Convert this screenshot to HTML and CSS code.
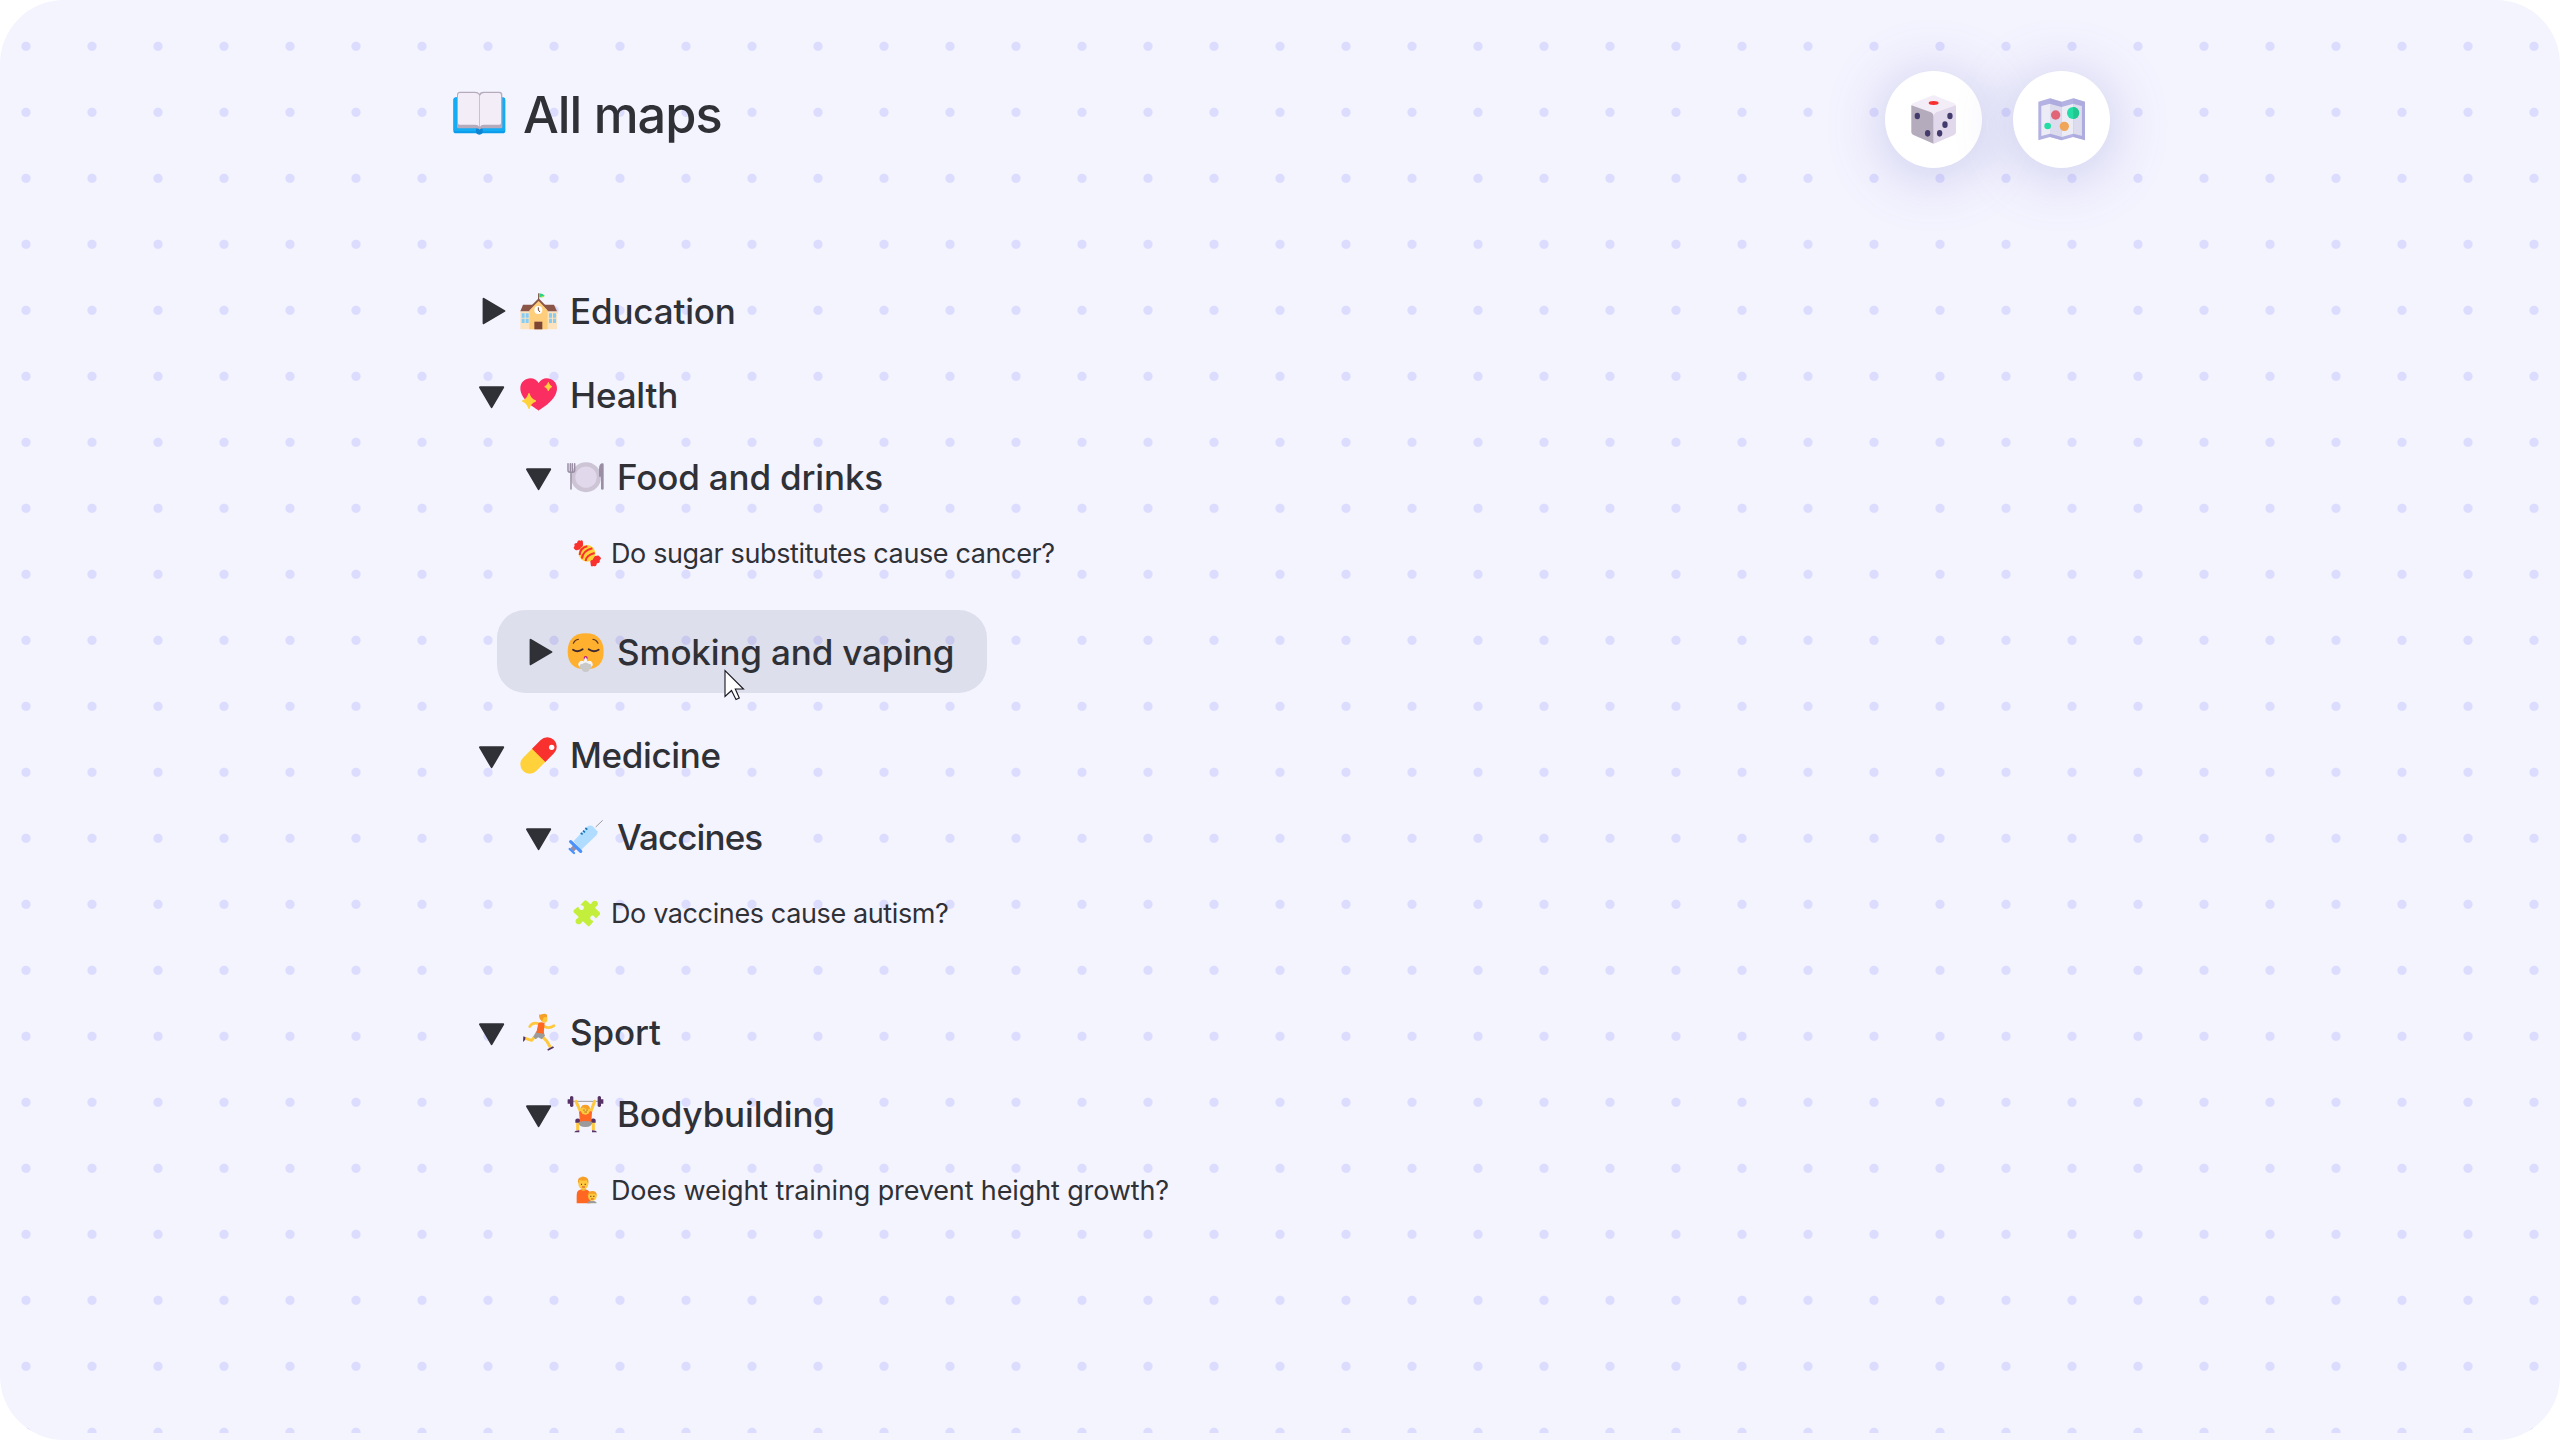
FILE: index.html
```html
<!DOCTYPE html>
<html lang="en">
<head>
<meta charset="utf-8">
<title>All maps</title>
<link rel="stylesheet" href="styles.css">
</head>
<body>
<svg class="sprite" aria-hidden="true">
  <symbol id="closed" viewBox="0 0 28 28"><path d="M5.6 1.8L26.4 14L5.6 26.2Z" fill="#2f3136" stroke="#2f3136" stroke-width="2" stroke-linejoin="round"/></symbol>
  <symbol id="open" viewBox="0 0 28 28"><path d="M2 6.3H25.2L13.6 26.1Z" fill="#2f3136" stroke="#2f3136" stroke-width="2" stroke-linejoin="round"/></symbol>
</svg>
<div class="frame">
  <main class="page">
    <header class="top">
      <h1 class="title">
        <svg class="book" viewBox="0 0 159 131">
          <rect x="1" y="19" width="156" height="108" rx="8" fill="#0a9ce8"/>
          <rect x="2" y="20" width="154" height="101" rx="6" fill="#14acf5"/>
          <path d="M69 112h20v14q-10 10-20 0z" fill="#0a86d4"/>
          <path d="M12 12q0-10 9-10h46q9 0 12 6q3-6 12-6h48q9 0 9 9v98q0 3-4 3H91q-9 0-11 4q-3-4-11-4H16q-4 0-4-4z" fill="#b6abbc"/>
          <path d="M15 12q0-6 6-6h45q10 0 13 8v93q-3-6-12-6H20q-5 0-5-4z" fill="#f3edf8"/>
          <path d="M81 14q3-8 12-8h45q6 0 6 6v85q0 4-5 4H92q-9 0-11 6z" fill="#f3edf8"/>
        </svg>
        <span>All maps</span>
      </h1>
      <nav class="actions">
        <a class="round">
          <svg class="dice" viewBox="0 0 136 146">
            <path d="M68 1Q72 1 80 5L130 25Q135 28 135 34V112Q135 117 129 120L75 143Q68 147 61 143L6 119Q1 116 1 111V32Q1 28 6 25L58 4Q64 1 68 1Z" fill="#f3edf8"/>
            <path d="M1 31L60 52Q68 56 68 66V146Q64 145 61 143L6 119Q1 116 1 111Z" fill="#b4acbc"/>
            <path d="M135 31L76 52Q68 56 68 66V146Q72 145 75 143L129 120Q135 117 135 112Z" fill="#e1d8ec"/>
            <ellipse cx="68" cy="24" rx="15" ry="6" fill="#f8312f"/>
            <g fill="#433b6b"><ellipse cx="19" cy="63" rx="8" ry="10"/><ellipse cx="50" cy="115" rx="8" ry="10"/><ellipse cx="117" cy="63" rx="8" ry="10"/><ellipse cx="102" cy="89" rx="8" ry="10"/><ellipse cx="86" cy="115" rx="8" ry="10"/></g>
          </svg>
        </a>
        <a class="round">
          <svg class="map" viewBox="0 0 142 128">
            <path d="M1 11L36 1L71 11L106 1L141 11V127L106 117L71 127L36 117L1 127Z" fill="#b4b2e2"/>
            <path d="M10 24L36 17V107L10 114Z" fill="#ececf7"/><path d="M36 17L71 27V117L36 107Z" fill="#dcdcee"/>
            <path d="M71 27L106 17V107L71 117Z" fill="#ececf7"/><path d="M106 17L132 24V114L106 107Z" fill="#dcdcee"/>
            <path d="M36 1L71 11V27L36 17ZM106 1L141 11V127L132 124V24L106 17ZM36 107L71 117V127L36 117ZM106 107L132 114V124L106 117Z" fill="#a9a7da" opacity=".55"/>
            <circle cx="53" cy="51" r="14" fill="#e26577"/><circle cx="105" cy="45" r="18" fill="#24dda4"/><path d="M106 27A18 18 0 0 1 106 63Z" fill="#22c790"/>
            <circle cx="29" cy="84" r="10" fill="#24dda4"/><circle cx="79" cy="85" r="14" fill="#f0a659"/>
          </svg>
        </a>
      </nav>
    </header>

    <ul class="tree">
      <li class="folder folded">
        <div class="row">
          <svg class="marker"><use href="#closed"/></svg>
          <svg class="emoji" viewBox="0 0 111 111">
            <path d="M1 55H111V109H1Z" fill="#fbe3c0"/>
            <path d="M9 35H102L111 55H1Z" fill="#8b5547"/>
            <path d="M28 50L56 22L83 50V109H28Z" fill="#ffce7c"/>
            <path d="M26 50L56 20L85 50" fill="none" stroke="#8b5547" stroke-width="6"/>
            <path d="M56 1V18" stroke="#6d4534" stroke-width="3"/>
            <path d="M58 1L68 3L74 8L66 13H58Z" fill="#2ecf80"/><path d="M66 9L74 8L71 13H62Z" fill="#a9e83c"/>
            <circle cx="55" cy="51" r="12" fill="#fff"/><path d="M55 43V51L60 57" fill="none" stroke="#6d4534" stroke-width="3"/>
            <path d="M43 86H67V109H43Z" fill="#7d4533"/>
            <path d="M5 61h9v13H5zM17 61h9v13h-9zM5 77h9v13H5zM17 77h9v13h-9zM87 61h9v13h-9zM99 61h9v13h-9zM87 77h9v13h-9zM99 77h9v13h-9z" fill="#86cdf5"/>
          </svg>
          <span class="name">Education</span>
        </div>
      </li>
      <li class="folder">
        <div class="row">
          <svg class="marker"><use href="#open"/></svg>
          <svg class="emoji" viewBox="0 0 111 111">
            <path d="M56 101C48 94 1 70 1 34C1 2 43-7 56 18C69-7 111 2 111 34C111 70 64 94 56 101Z" fill="#fb2e62"/>
            <path d="M85 16Q88 26 96 29Q88 32 85 42Q82 32 74 29Q82 26 85 16Z" fill="#ffd23b" stroke="#ffd23b" stroke-width="2" stroke-linejoin="round"/>
            <path d="M27 50Q31 67 46 72Q31 77 27 94Q22 77 8 72Q22 67 27 50Z" fill="#ffd23b" stroke="#ffd23b" stroke-width="4" stroke-linejoin="round"/>
          </svg>
          <span class="name">Health</span>
        </div>
        <ul class="branch">
          <li class="group">
            <div class="row">
              <svg class="marker"><use href="#open"/></svg>
              <svg class="emoji" viewBox="0 0 111 111">
                <circle cx="57" cy="54.5" r="45" fill="#cdc4d6"/><circle cx="57" cy="54.5" r="32" fill="#e1d8ec"/>
                <path d="M3 14V34Q3 40 9 40H17Q23 40 23 34V14M10 14V38M16 14V38M12 40V90" fill="none" stroke="#998ea4" stroke-width="4.5" stroke-linecap="round"/>
                <path d="M96 53V30Q96 13 107 13Q110 13 110 17V89Q110 92 106 92T102 89V53Z" fill="#998ea4"/>
              </svg>
              <span class="name">Food and drinks</span>
            </div>
            <ul class="leaves">
              <li class="leaf">
                <svg class="glyph" viewBox="0 0 84 84">
                  <path d="M28 26L14 30Q8 32 5 28Q-1 24 5 18Q1 9 12 9Q14-2 22 2Q30-2 30 8Q31 15 28 26Z" fill="#f8312f"/>
                  <path d="M54 52L67 48Q78 44 80 50Q88 54 80 60Q83 69 72 70Q70 82 61 78Q52 82 53 72Q50 64 54 52Z" fill="#f8312f"/>
                  <circle cx="42" cy="40" r="25" fill="#ffd23b"/>
                  <path d="M20 45Q21 24 43 19M27 56Q28 33 58 25M38 63Q39 46 65 39" fill="none" stroke="#f8312f" stroke-width="6"/>
                </svg>
                <span class="question">Do sugar substitutes cause cancer?</span>
              </li>
            </ul>
          </li>
          <li class="group">
            <div class="row hovered">
              <svg class="marker"><use href="#closed"/></svg>
              <svg class="emoji" viewBox="0 0 111 111">
                <path d="M56 1C94 1 110 24 110 56C110 90 92 109 56 109C20 109 2 90 2 56C2 24 18 1 56 1Z" fill="#ffb02e"/>
                <path d="M18 50Q32 60 47 49M65 49Q80 60 95 50" fill="none" stroke="#402a32" stroke-width="5.5" stroke-linecap="round"/>
                <path d="M19 31Q24 20 34 19M78 19Q88 20 93 31" fill="none" stroke="#5c3829" stroke-width="3.5" stroke-linecap="round"/>
                <circle cx="56" cy="75" r="6" fill="#bb1d80"/>
                <path d="M56 72Q60 76 61 85Q72 80 76 89Q80 95 74 101Q68 106 56 106T37 101Q31 95 36 88Q41 80 50 85Q52 76 56 72Z" fill="#f4f4f4"/>
                <path d="M38 99Q38 92 46 93Q56 84 66 93Q74 92 73 99Q76 106 68 108Q66 117 56 117T44 108Q35 106 38 99Z" fill="#c9c9c9"/>
              </svg>
              <span class="name">Smoking and vaping</span>
              <svg class="cursor" viewBox="-1 -1 22 33"><path d="M0 .5V26.5L6.5 20.5L11 29.5L14.3 28L10.3 19H18.5Z" fill="#fff" stroke="#15151f" stroke-width="1.1"/></svg>
            </div>
          </li>
        </ul>
      </li>
      <li class="folder">
        <div class="row">
          <svg class="marker"><use href="#open"/></svg>
          <svg class="emoji" viewBox="0 0 111 111">
            <path d="M29 82L56 55" stroke="#ffd23b" stroke-width="56" stroke-linecap="round"/>
            <path d="M36 35L62 9A28 28 0 0 1 102 49L76 75Z" fill="#f8312f"/>
            <circle cx="95" cy="31" r="8" fill="#fff"/>
          </svg>
          <span class="name name--snug">Medicine</span>
        </div>
        <ul class="branch">
          <li class="group">
            <div class="row">
              <svg class="marker"><use href="#open"/></svg>
              <svg class="emoji" viewBox="0 0 111 111">
                <path d="M86 24L107 4" stroke="#9b9b9b" stroke-width="3"/>
                <path d="M20 66L62 22Q68 17 76 21L91 37Q93 42 89 48L42 93Z" fill="#b0dcff"/>
                <path d="M14 84L24 94" stroke="#998ea4" stroke-width="12"/>
                <path d="M11 68L41 97" stroke="#4a92fb" stroke-width="10" stroke-linecap="round"/>
                <path d="M8 90L21 102" stroke="#4a92fb" stroke-width="7" stroke-linecap="round"/>
                <path d="M41 42L47 46M48 35L54 40M55 27L61 32" stroke="#1677b8" stroke-width="5"/>
              </svg>
              <span class="name name--tight">Vaccines</span>
            </div>
            <ul class="leaves">
              <li class="leaf">
                <svg class="glyph" viewBox="0 0 84 84">
                  <path d="M2 31L14 21Q17 20 18 25Q21 32 29 29Q35 25 31 18Q28 16 22 15L34 2Q37-1 41 2L51 11Q55 14 56 8Q62-1 71 4Q79 11 71 19Q65 21 67 25L80 37Q83 41 80 44L70 54Q67 56 65 51Q61 44 54 48Q49 54 54 60Q60 61 61 65L50 77Q47 80 44 77L33 67Q28 61 26 68Q19 76 11 71Q4 64 11 56Q19 54 15 49L3 38Q0 34 2 31Z" fill="#c3ef3c"/>
                </svg>
                <span class="question">Do vaccines cause autism?</span>
              </li>
            </ul>
          </li>
        </ul>
      </li>
      <li class="folder">
        <div class="row">
          <svg class="marker"><use href="#open"/></svg>
          <svg class="emoji" viewBox="0 0 111 111">
            <path d="M57 29Q37 23 29 38M72 37Q88 46 102 35" fill="none" stroke="#ffc83d" stroke-width="8" stroke-linecap="round" stroke-linejoin="round"/>
            <path d="M47 64L35 79L16 73" fill="none" stroke="#ffc83d" stroke-width="9" stroke-linejoin="round"/>
            <path d="M67 68L80 81L92 101" fill="none" stroke="#ffc83d" stroke-width="9"/>
            <path d="M10 67L17 70L15 78L9 84ZM82 106L99 97L102 101L84 110Z" fill="#563365"/>
            <path d="M49 52L71 54L75 65L65 76L55 70L47 76L40 68Z" fill="#9b9b9b"/>
            <path d="M55 28Q64 22 74 28L71 59L49 56Z" fill="#ff6723"/>
            <path d="M63 8H82V18Q81 27 72 26Q64 25 63 16Z" fill="#ffc83d"/>
            <path d="M58 1Q60 3 65 1Q75-3 81 2V10H72L66 22Q55 15 58 1Z" fill="#f59f26"/>
          </svg>
          <span class="name">Sport</span>
        </div>
        <ul class="branch">
          <li class="group">
            <div class="row">
              <svg class="marker"><use href="#open"/></svg>
              <svg class="emoji" viewBox="0 0 111 111">
                <path d="M2 16H108" stroke="#9b9b9b" stroke-width="3"/>
                <path d="M27 16L42 50M83 16L70 50" stroke="#ffc83d" stroke-width="9" stroke-linecap="round"/>
                <path d="M32 78V103M79 78V103" stroke="#ffc83d" stroke-width="9"/>
                <path d="M2 10h7v13H2zM9 3Q14-3 19 3V30Q14 36 9 30zM102 10h7v13h-7zM92 3Q97-3 102 3V30Q97 36 92 30zM25 71Q32 64 40 71V80H25zM71 71Q79 64 86 71V80H71zM22 109Q24 103 37 103V109zM75 103Q88 103 90 109H75z" fill="#563365"/>
                <path d="M36 47Q55 39 75 47L73 80H39Z" fill="#ff6723"/>
                <path d="M35 78Q55 72 76 78Q76 93 55 93T35 78Z" fill="#9b9b9b"/>
                <circle cx="55" cy="42" r="14" fill="#ffc83d"/><path d="M41 39Q42 26 55 26T69 39Q55 41 48 34Z" fill="#f59f26"/>
                <circle cx="51" cy="42" r="1.8" fill="#5c3829"/><circle cx="60" cy="42" r="1.8" fill="#5c3829"/><path d="M52 48H60" stroke="#8a4b2a" stroke-width="2"/>
              </svg>
              <span class="name">Bodybuilding</span>
            </div>
            <ul class="leaves">
              <li class="leaf">
                <svg class="glyph" viewBox="0 0 84 84">
                  <path d="M11 79V54Q11 38 28 37H36Q52 40 53 56V79Z" fill="#ff6723"/>
                  <path d="M25 30H38V40Q31 44 25 40Z" fill="#f0b030"/>
                  <ellipse cx="31" cy="20" rx="15" ry="17" fill="#ffc83d"/>
                  <path d="M15 20Q13 1 24 1Q28-4 36 0Q49 3 46 20Q42 14 41 10Q28 13 20 9Q18 16 15 20Z" fill="#f59f26"/>
                  <path d="M42 79Q44 71 57 71T71 79Z" fill="#9b9b9b"/>
                  <circle cx="58" cy="58" r="13" fill="#ffc83d"/><path d="M44 57Q43 43 57 42Q73 42 71 57L66 50H50Z" fill="#f59f26"/>
                  <path d="M24 20h3v4h-3zM35 20h3v4h-3zM52 56h3v4h-3zM61 56h3v4h-3z" fill="#5c3829"/><path d="M27 30H36M54 66H62" stroke="#c4302b" stroke-width="2.5"/>
                </svg>
                <span class="question question--wide">Does weight training prevent height growth?</span>
              </li>
            </ul>
          </li>
        </ul>
      </li>
    </ul>
  </main>
</div>
</body>
</html>
```
FILE: styles.css
```css
* { box-sizing: border-box; }
body { margin: 0; background: #fff; color: #2f3136; font-family: "Inter", "Liberation Sans", sans-serif; }
ul { list-style: none; margin: 0; padding: 0; }
svg { display: block; flex: none; overflow: visible; }
.sprite { position: absolute; width: 0; height: 0; }

.frame { height: 1440px; background: #f4f4ff; border-radius: 64px; overflow: hidden; }
.page {
  height: 1433px;
  padding: 71px 450px 0;
  background: radial-gradient(circle at 26px 46.3px, #dcdcff 4.1px, rgba(220, 220, 255, 0) 5.1px) 0 0 / 66px 66px;
}

.top { display: flex; justify-content: space-between; align-items: flex-start; height: 199px; padding-left: 3px; }
.title { display: flex; align-items: center; gap: 17px; margin: 13px 0 0; height: 61px; font-size: 50.5px; font-weight: 500; letter-spacing: -1px; line-height: 61px; }
.book { width: 53px; height: 43.7px; margin-top: -4px; }
.actions { display: flex; gap: 31px; }
.round { display: flex; align-items: center; justify-content: center; width: 97px; height: 97px; border-radius: 50%; background: #fff; box-shadow: 0 6px 60px rgba(100, 100, 190, .32); }
.dice { width: 45.3px; height: 48.7px; }
.map { width: 47.3px; height: 42.7px; }

.row { display: flex; align-items: center; width: max-content; height: 82px; padding: 0 33px 0 28px; border-radius: 28px; }
.hovered { position: relative; height: 83px; background: rgba(0, 10, 60, .09); }
.marker { width: 28px; height: 28px; margin-right: 14px; }
.emoji { width: 37px; height: 37px; margin-right: 13px; }
.name { font-size: 35px; font-weight: 500; line-height: 50px; letter-spacing: -.16px; white-space: nowrap; }
.name--snug { letter-spacing: -.36px; }
.name--tight { letter-spacing: -.9px; }

.folder { padding-bottom: 21px; }
.folded { padding-bottom: 2px; }
.branch { padding-left: 47px; }
.leaves { padding: 0 0 20px 76px; }
.leaf { display: flex; align-items: center; gap: 10px; height: 72px; }
.glyph { width: 28px; height: 28px; margin-top: -1px; }
.question { font-size: 27px; font-weight: 400; line-height: 40px; letter-spacing: -.38px; white-space: nowrap; }
.question--wide { letter-spacing: -.13px; }

.cursor { position: absolute; left: 227px; top: 59px; width: 22px; height: 33px; }
```
